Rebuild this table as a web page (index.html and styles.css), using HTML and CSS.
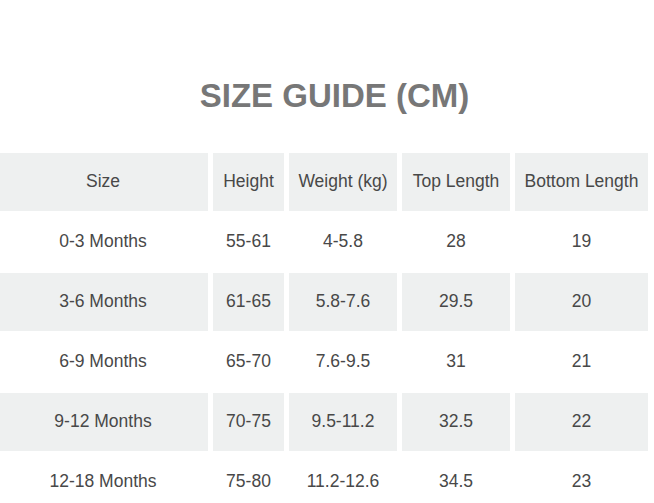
FILE: index.html
```html
<!DOCTYPE html>
<html lang="en">
<head>
<meta charset="utf-8">
<title>Size Guide</title>
<link rel="stylesheet" href="styles.css">
</head>
<body>
<div class="page">
  <h1 class="title">SIZE GUIDE (CM)</h1>
  <table class="sizes">
    <colgroup>
      <col class="c1"><col class="c2"><col class="c3"><col class="c4"><col class="c5">
    </colgroup>
    <thead>
      <tr class="shade"><th>Size</th><th>Height</th><th>Weight (kg)</th><th>Top Length</th><th>Bottom Length</th></tr>
    </thead>
    <tbody>
      <tr><td>0-3 Months</td><td>55-61</td><td>4-5.8</td><td>28</td><td>19</td></tr>
      <tr class="shade"><td>3-6 Months</td><td>61-65</td><td>5.8-7.6</td><td>29.5</td><td>20</td></tr>
      <tr><td>6-9 Months</td><td>65-70</td><td>7.6-9.5</td><td>31</td><td>21</td></tr>
      <tr class="shade"><td>9-12 Months</td><td>70-75</td><td>9.5-11.2</td><td>32.5</td><td>22</td></tr>
      <tr><td>12-18 Months</td><td>75-80</td><td>11.2-12.6</td><td>34.5</td><td>23</td></tr>
    </tbody>
  </table>
</div>
</body>
</html>
```

FILE: styles.css
```css
html, body {
  margin: 0;
  padding: 0;
  background: #ffffff;
}
body {
  font-family: "Liberation Sans", Arial, sans-serif;
  color: #484848;
  overflow: hidden;
}
.page {
  padding-top: 76px;
}
.title {
  margin: 0 0 35px 0;
  padding-left: 15px;
  text-align: center;
  font-size: 33px;
  line-height: 40px;
  font-weight: bold;
  color: #777777;
}
.sizes {
  table-layout: fixed;
  border-collapse: separate;
  border-spacing: 5px 2px;
  width: 660px;
  margin-left: -7px;
}
.c1 { width: 210px; }
.c2 { width: 71px; }
.c3 { width: 108px; }
.c4 { width: 108px; }
.c5 { width: 133px; }
.sizes th,
.sizes td {
  height: 58px;
  padding: 0 0 2px 0;
  box-sizing: border-box;
  text-align: center;
  vertical-align: middle;
  font-size: 17.5px;
  font-weight: normal;
  color: #484848;
  white-space: nowrap;
}
.shade th,
.shade td {
  background: #eef0f0;
}
```
